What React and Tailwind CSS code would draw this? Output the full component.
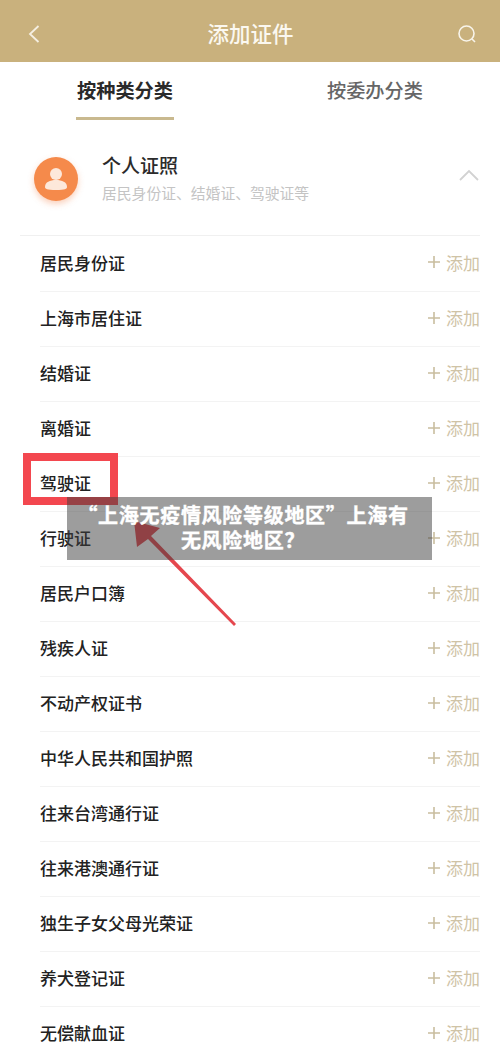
const F = { fontFamily: '"Noto Sans CJK SC", "Noto Sans", sans-serif' };

const items = ['居民身份证','上海市居住证','结婚证','离婚证','驾驶证','行驶证','居民户口簿','残疾人证','不动产权证书','中华人民共和国护照','往来台湾通行证','往来港澳通行证','独生子女父母光荣证','养犬登记证','无偿献血证'];

function Row({ name, first }) {
  return (
    <div className={first ? 'h-[55px] flex items-center justify-between pb-[3px]' : 'h-[55px] flex items-center justify-between pb-[3px] border-t border-[#f3f3f3]'}>
      <span className="text-[17px] leading-none text-[#222] font-medium">{name}</span>
      <span className="flex items-center gap-[6px] text-[#cfc3a6]">
        <svg width="12" height="12" viewBox="0 0 12 12" fill="none" stroke="#c9bd9f" strokeWidth="1.6"><path d="M6 0v12M0 6h12" /></svg>
        <span className="text-[17px] leading-none">添加</span>
      </span>
    </div>
  );
}

export default function App() {
  return (
    <div style={F} className="relative w-[500px] h-[1057px] overflow-hidden bg-white">
      <header className="h-[62px] bg-[#c9b17d] flex items-center justify-between pl-[27px] pr-[23px] pt-[6px] text-white">
        <svg width="14" height="20" viewBox="0 0 14 20" fill="none" stroke="#f5efe2" strokeWidth="1.8"><path d="M11.500 2 3 10l8.500 8" /></svg>
        <h1 className="ml-[3px] text-[21.5px] leading-none font-medium text-[#fbf8f0] -translate-y-[1px]">添加证件</h1>
        <svg width="20" height="20" viewBox="0 0 20 20" fill="none" stroke="#f8f4ea" strokeWidth="1.6"><circle cx="9.500" cy="9.500" r="7.500" /><path d="m15 15 3 3" /></svg>
      </header>

      <nav className="h-[58px] flex">
        <div className="ml-[76px] w-[98px] flex flex-col items-center">
          <span className="mt-[19px] text-[19.2px] leading-none font-bold text-[#2a2a2a] whitespace-nowrap">按种类分类</span>
          <span className="mt-auto h-[3px] w-full bg-[#c9b98f]" />
        </div>
        <span className="ml-[153px] mt-[19px] text-[19.2px] leading-none font-medium text-[#666] whitespace-nowrap">按委办分类</span>
      </nav>

      <section className="mx-[20px] h-[116px] flex items-center pl-[14px] pb-[1px] border-b border-[#f0f0f0]">
        <div className="w-[44px] h-[44px] mt-[4px] rounded-full bg-[#f58a4b] shadow-[0_3px_6px_rgba(240,120,60,0.35)] flex items-center justify-center">
          <svg width="26" height="28" viewBox="0 0 26 28"><circle cx="13" cy="9" r="6" fill="#fde8da" /><path d="M2 22c0-5 5-7 11-7s11 2 11 7c0 2-2 3-11 3S2 24 2 22Z" fill="#fde8da" /></svg>
        </div>
        <div className="ml-[24px] flex-1 pt-[1px]">
          <div className="text-[19px] leading-none text-[#2b2b2b] font-medium">个人证照</div>
          <div className="mt-[12px] text-[14.8px] leading-none text-[#c4c4c4] whitespace-nowrap">居民身份证、结婚证、驾驶证等</div>
        </div>
        <svg className="-translate-y-[2px] shrink-0" width="22" height="14" viewBox="0 0 22 14" fill="none" stroke="#d2d2d2" strokeWidth="1.8"><path d="M2 12 11 3l9 9" /></svg>
      </section>

      <main className="pl-[40px] pr-[20px] flex flex-col">
        {items.map((n, i) => <Row key={n} name={n} first={i === 0} />)}
      </main>

      <div className="absolute left-[23px] top-[453px] w-[95px] h-[52px] border-[8px] border-[#f3474f]" />
      <svg className="absolute left-[120px] top-[510px]" width="125" height="125" viewBox="0 0 125 125">
        <path d="M114 116 28 29l-11 8L14 11l26 7-9 8 85 88Z" fill="#e5474e" />
      </svg>

      <div className="absolute left-[67px] top-[497px] w-[365px] h-[63px] bg-[rgba(60,60,60,0.5)] flex items-center justify-center text-center pr-[13px]">
        <p className="w-[340px] text-[20px] leading-[25px] font-bold text-white tracking-[0.7px] [-webkit-text-stroke:0.4px_white] -translate-y-[2px]">“上海无疫情风险等级地区”上海有无风险地区？</p>
      </div>
    </div>
  );
}
